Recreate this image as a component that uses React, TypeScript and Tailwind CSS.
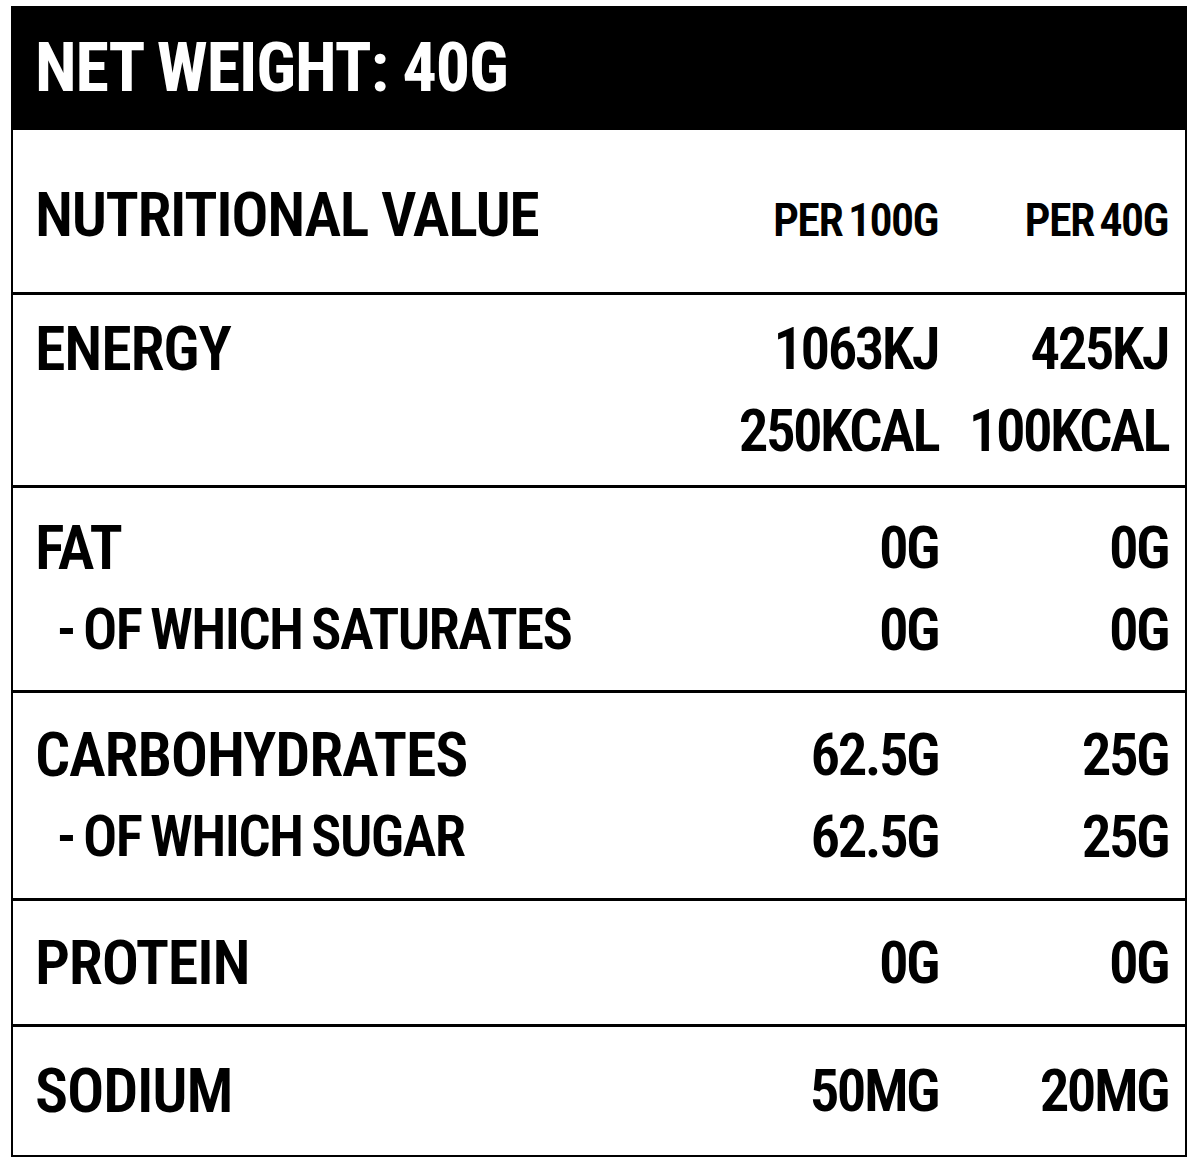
type Row = { label: string[]; a: string[]; b: string[]; h: string }

const rows: Row[] = [
  { label: ["ENERGY"], a: ["1063KJ", "250KCAL"], b: ["425KJ", "100KCAL"], h: "h-[193px]" },
  { label: ["FAT", "- OF WHICH SATURATES"], a: ["0G", "0G"], b: ["0G", "0G"], h: "h-[205px]" },
  { label: ["CARBOHYDRATES", "- OF WHICH SUGAR"], a: ["62.5G", "62.5G"], b: ["25G", "25G"], h: "h-[208px]" },
  { label: ["PROTEIN"], a: ["0G"], b: ["0G"], h: "h-[126px]" },
  { label: ["SODIUM"], a: ["50MG"], b: ["20MG"], h: "h-[131px]" },
]

export default function App() {
  return (
    <div className="min-h-screen bg-white pt-[6px] pl-[11px] font-[Roboto,sans-serif] font-stretch-condensed">
      <div className="w-[1176px] border-2 border-black text-black font-semibold">
        <div className="h-[122px] bg-black flex items-center pl-[22px] pb-[2px]">
          <span className="text-white text-[68px] leading-none tracking-[-1.1px] font-bold">NET WEIGHT: 40G</span>
        </div>
        <div className="h-[162px] flex items-center pl-[22px] pr-[17px] pt-[8px] whitespace-nowrap">
          <div className="flex-1 text-[62px] leading-none tracking-[-1.4px]">NUTRITIONAL VALUE</div>
          <div className="w-[300px] text-right text-[46px] leading-none pt-[10px] tracking-[-1.6px] [word-spacing:-3px]">PER 100G</div>
          <div className="w-[230px] text-right text-[46px] leading-none pt-[10px] tracking-[-1.6px] [word-spacing:-3px]">PER 40G</div>
        </div>
        {rows.map((r) => (
          <div key={r.label[0]} className={`${r.h} border-t-[3px] border-black flex items-center pl-[22px] pr-[17px] whitespace-nowrap`}>
            <div className="flex w-full items-start">
              <div className="flex-1">
                {r.label.map((l, i) => (
                  <div
                    key={l}
                    className={i > 0 ? "leading-[82px] pl-[22px] text-[57px] tracking-[-1.6px] [word-spacing:-3px]" : "leading-[82px] text-[62px] tracking-[-1.2px]"}
                  >
                    {l}
                  </div>
                ))}
              </div>
              <div className="w-[300px] text-right text-[59px] tracking-[-2.6px]">
                {r.a.map((v, i) => (
                  <div key={i} className="leading-[82px]">{v}</div>
                ))}
              </div>
              <div className="w-[230px] text-right text-[59px] tracking-[-2.6px]">
                {r.b.map((v, i) => (
                  <div key={i} className="leading-[82px]">{v}</div>
                ))}
              </div>
            </div>
          </div>
        ))}
      </div>
    </div>
  )
}
